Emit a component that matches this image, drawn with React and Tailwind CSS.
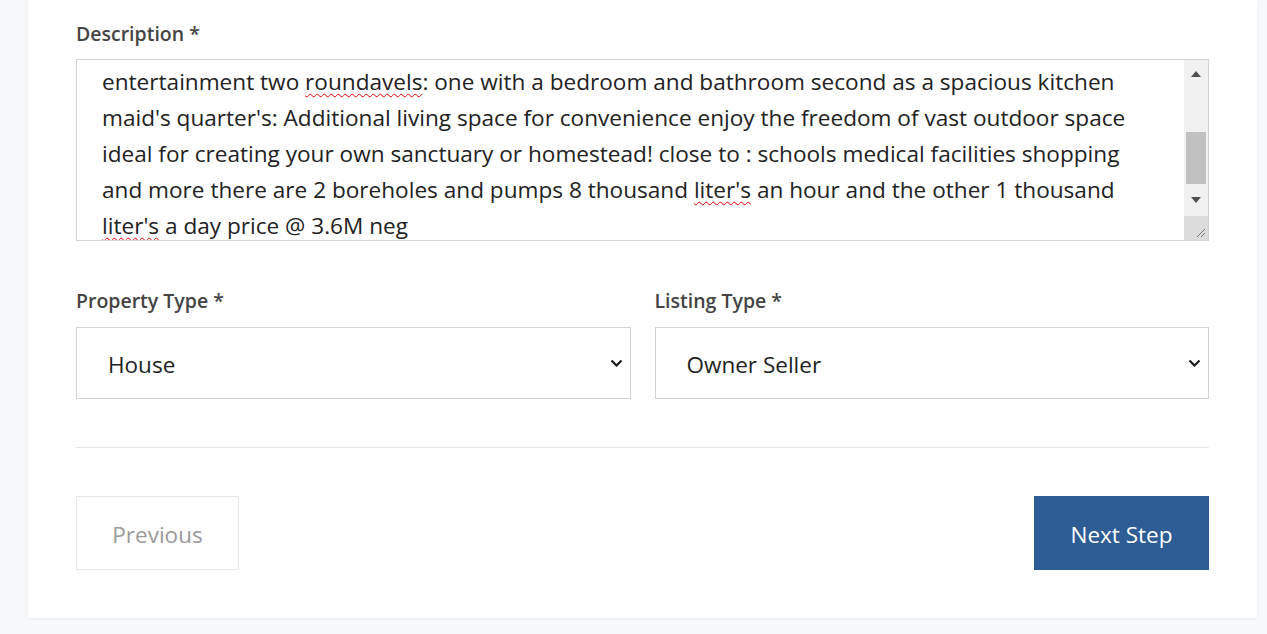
import React from "react";

const Misspelled = ({ children }) => (
  <span className="underline decoration-wavy decoration-[#e00] decoration-1 underline-offset-[3px]">
    {children}
  </span>
);

function Chevron() {
  return (
    <svg width="13" height="8" viewBox="0 0 13 8" className="shrink-0">
      <path d="M1.5 1.5 L6.5 6.5 L11.5 1.5" fill="none" stroke="#1a1a1a" strokeWidth="2.2" />
    </svg>
  );
}

function FakeScrollbar() {
  return (
    <div className="flex w-[24px] shrink-0 flex-col bg-[#f1f1f1]">
      <div className="flex h-[28px] items-center justify-center">
        <svg width="10" height="6" viewBox="0 0 10 6">
          <path d="M5 0 L10 6 L0 6 Z" fill="#505050" />
        </svg>
      </div>
      <div className="h-[44px]" />
      <div className="mx-[2px] h-[52px] bg-[#c1c1c1]" />
      <div className="flex h-[32px] items-center justify-center">
        <svg width="10" height="6" viewBox="0 0 10 6">
          <path d="M0 0 L10 0 L5 6 Z" fill="#505050" />
        </svg>
      </div>
      <div className="flex flex-1 items-end justify-end bg-[#dcdcdc] p-[2px]">
        <svg width="12" height="12" viewBox="0 0 12 12">
          <path d="M11 3 L3 11 M11 7 L7 11" stroke="#777" strokeWidth="1" />
        </svg>
      </div>
    </div>
  );
}

function SelectBox({ label, value }) {
  return (
    <div className="flex flex-col">
      <label className="mb-[12px] text-[19.5px] font-semibold leading-[28px] text-[#444]">{label}</label>
      <div className="flex h-[72px] items-center justify-between border border-[#d4d4d4] bg-white pl-[31px] pr-[7px] text-[22.5px] text-[#222]">
        <span className="pt-[4px]">{value}</span>
        <Chevron />
      </div>
    </div>
  );
}

export default function App() {
  return (
    <div
      className="min-h-screen bg-[#f7f8fa] pl-[28px] pr-[10px]"
      style={{ fontFamily: '"Open Sans", "Noto Sans", sans-serif' }}
    >
      <div className="bg-white px-[48px] pt-[20px] pb-[48px] shadow-[0_1px_3px_rgba(0,0,0,0.06)]">
        <label className="mb-[11px] block text-[19.5px] font-semibold leading-[28px] text-[#444]">
          Description *
        </label>
        <div className="flex h-[182px] border border-[#d4d4d4] bg-white">
          <div className="flex-1 overflow-hidden pl-[25px] pr-[20px] pt-[4px] text-[22.6px] leading-[36px] text-[#222]">
            <div className="whitespace-nowrap">
              entertainment two <Misspelled>roundavels</Misspelled>: one with a bedroom and bathroom second as a spacious kitchen
            </div>
            <div className="whitespace-nowrap">
              maid's quarter's: Additional living space for convenience enjoy the freedom of vast outdoor space
            </div>
            <div className="whitespace-nowrap">
              ideal for creating your own sanctuary or homestead! close to : schools medical facilities shopping
            </div>
            <div className="whitespace-nowrap">
              and more there are 2 boreholes and pumps 8 thousand <Misspelled>liter's</Misspelled> an hour and the other 1 thousand
            </div>
            <div className="whitespace-nowrap">
              <Misspelled>liter's</Misspelled> a day price @ 3.6M neg
            </div>
          </div>
          <FakeScrollbar />
        </div>

        <div className="mt-[46px] grid grid-cols-2 gap-[24px]">
          <SelectBox label="Property Type *" value="House" />
          <SelectBox label="Listing Type *" value="Owner Seller" />
        </div>

        <hr className="mt-[48px] border-t border-[#e6e6e6]" />

        <div className="mt-[48px] flex items-center justify-between">
          <button className="h-[74px] w-[163px] border border-[#e6e6e6] bg-white pt-[4px] text-[22.5px] text-[#9a9a9a]">
            Previous
          </button>
          <button className="h-[74px] w-[175px] bg-[#2e5c94] pt-[4px] text-[22.5px] text-white">
            Next Step
          </button>
        </div>
      </div>
    </div>
  );
}
